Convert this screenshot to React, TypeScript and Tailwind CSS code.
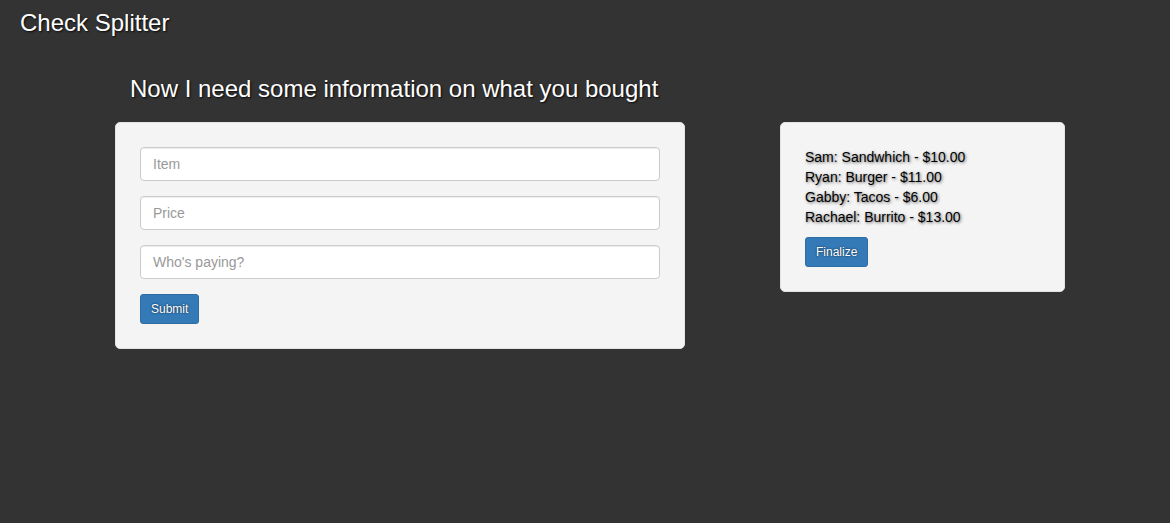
import React from "react";

const font = "font-['Helvetica_Neue','Liberation_Sans',Arial,sans-serif]";

export default function App() {
  const items = [
    "Sam: Sandwhich - $10.00",
    "Ryan: Burger - $11.00",
    "Gabby: Tacos - $6.00",
    "Rachael: Burrito - $13.00",
  ];
  return (
    <div className={`min-h-[523px] w-full bg-[#333333] ${font}`}>
      <div className="h-[36px] pl-5 pt-[10px]">
        <h1 className="text-[24px] leading-[26.4px] text-white [text-shadow:1px_1px_2px_rgba(0,0,0,0.85)]">
          Check Splitter
        </h1>
      </div>
      <div className="pl-[130px] pt-[40px]">
        <h2 className="text-[24px] leading-[26.4px] text-white [text-shadow:1px_1px_2px_rgba(0,0,0,0.85)]">
          Now I need some information on what you bought
        </h2>
      </div>
      <div className="flex items-start gap-[95px] pl-[115px] pt-[20px]">
        <div className="w-[570px] rounded-[5px] border border-[#e3e3e3] bg-[#f4f4f4] p-6">
          <div className="flex flex-col gap-[15px]">
            {["Item", "Price", "Who's paying?"].map((p) => (
              <input
                key={p}
                placeholder={p}
                className="h-[34px] w-full rounded-[4px] border border-[#cccccc] bg-white px-3 text-[14px] text-[#555] shadow-[inset_0_1px_1px_rgba(0,0,0,0.075)] outline-none placeholder:text-[#999]"
              />
            ))}
          </div>
          <button className="mt-[15px] h-[30px] rounded-[3px] border border-[#2e6da4] bg-[#337ab7] px-[10px] text-[12px] leading-[18px] text-white [text-shadow:0_0_2px_rgba(0,0,0,0.8)]">
            Submit
          </button>
        </div>
        <div className="w-[285px] rounded-[5px] border border-[#e3e3e3] bg-[#f4f4f4] p-6">
          <ul className="text-[14px] leading-[20px] text-black [text-shadow:1px_1px_3px_rgba(0,0,0,0.6)]">
            {items.map((i) => (
              <li key={i}>{i}</li>
            ))}
          </ul>
          <button className="mt-[10px] h-[30px] rounded-[3px] border border-[#2e6da4] bg-[#337ab7] px-[10px] text-[12px] leading-[18px] text-white [text-shadow:0_0_2px_rgba(0,0,0,0.8)]">
            Finalize
          </button>
        </div>
      </div>
    </div>
  );
}
